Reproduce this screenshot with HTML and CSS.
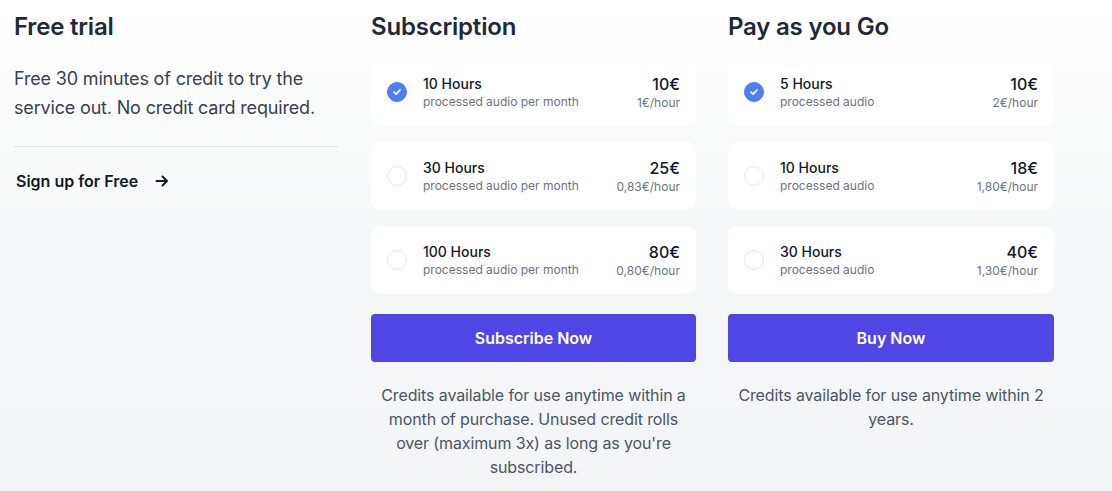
FILE: index.html
```html
<!DOCTYPE html>
<html lang="en">
<head>
<meta charset="utf-8">
<title>Pricing</title>
<link rel="stylesheet" href="styles.css">
</head>
<body>
<main class="pricing">
  <section class="col">
    <h2 class="title">Free trial</h2>
    <p class="lead">Free 30 minutes of credit to try the service out. No credit card required.</p>
    <hr class="divider">
    <a class="signup" href="#">Sign up for Free
      <svg class="arrow" width="14" height="14" viewBox="0 0 14 14" fill="none" stroke="#111827" stroke-width="2" stroke-linecap="round" stroke-linejoin="round"><path d="M1.5 7h10.5M7.5 2.5 12 7l-4.5 4.5"/></svg>
    </a>
  </section>

  <section class="col">
    <h2 class="title">Subscription</h2>
    <div class="options">
      <label class="opt">
        <span class="radio checked"><svg width="10" height="10" viewBox="0 0 10 10" fill="none" stroke="#fff" stroke-width="1.8" stroke-linecap="round" stroke-linejoin="round"><path d="M2 5.2 4.1 7.2 8 3"/></svg></span>
        <span class="info"><span class="name">10 Hours</span><span class="sub">processed audio per month</span></span>
        <span class="price"><span class="amount">10€</span><span class="sub">1€/hour</span></span>
      </label>
      <label class="opt">
        <span class="radio"></span>
        <span class="info"><span class="name">30 Hours</span><span class="sub">processed audio per month</span></span>
        <span class="price"><span class="amount">25€</span><span class="sub">0,83€/hour</span></span>
      </label>
      <label class="opt">
        <span class="radio"></span>
        <span class="info"><span class="name">100 Hours</span><span class="sub">processed audio per month</span></span>
        <span class="price"><span class="amount">80€</span><span class="sub">0,80€/hour</span></span>
      </label>
    </div>
    <button class="cta">Subscribe Now</button>
    <p class="note">Credits available for use anytime within a month of purchase. Unused credit rolls over (maximum 3x) as long as you're subscribed.</p>
  </section>

  <section class="col">
    <h2 class="title">Pay as you Go</h2>
    <div class="options">
      <label class="opt">
        <span class="radio checked"><svg width="10" height="10" viewBox="0 0 10 10" fill="none" stroke="#fff" stroke-width="1.8" stroke-linecap="round" stroke-linejoin="round"><path d="M2 5.2 4.1 7.2 8 3"/></svg></span>
        <span class="info"><span class="name">5 Hours</span><span class="sub">processed audio</span></span>
        <span class="price"><span class="amount">10€</span><span class="sub">2€/hour</span></span>
      </label>
      <label class="opt">
        <span class="radio"></span>
        <span class="info"><span class="name">10 Hours</span><span class="sub">processed audio</span></span>
        <span class="price"><span class="amount">18€</span><span class="sub">1,80€/hour</span></span>
      </label>
      <label class="opt">
        <span class="radio"></span>
        <span class="info"><span class="name">30 Hours</span><span class="sub">processed audio</span></span>
        <span class="price"><span class="amount">40€</span><span class="sub">1,30€/hour</span></span>
      </label>
    </div>
    <button class="cta">Buy Now</button>
    <p class="note">Credits available for use anytime within 2 years.</p>
  </section>
</main>
</body>
</html>
```

FILE: styles.css
```css
* { box-sizing: border-box; }
html, body { margin: 0; padding: 0; }
body {
  width: 1112px;
  height: 491px;
  overflow: hidden;
  font-family: Inter, "Noto Sans", sans-serif;
  color: #111827;
  background: linear-gradient(180deg, #ffffff 0%, #f7f8f9 45%, #f3f4f6 100%);
}
.pricing {
  display: grid;
  grid-template-columns: 325px 325px 326px;
  column-gap: 32px;
  padding: 11px 0 0 14px;
}
.col { display: flex; flex-direction: column; }
.title {
  margin: 0;
  font-size: 24px;
  line-height: 32px;
  font-weight: 600;
  color: #1f2937;
  letter-spacing: -0.2px;
}
.lead {
  margin: 21px 0 0;
  font-size: 18px;
  line-height: 29px;
  color: #374151;
  letter-spacing: -0.17px;
}
.divider {
  margin: 24px 0 0;
  border: 0;
  border-top: 1px solid #e5e7eb;
  height: 0;
}
.signup {
  margin: 22px 0 0 2px;
  display: flex;
  align-items: center;
  gap: 17px;
  font-size: 16px;
  line-height: 24px;
  font-weight: 600;
  color: #111827;
  text-decoration: none;
}
.options {
  margin-top: 15px;
  display: flex;
  flex-direction: column;
  gap: 16px;
}
.opt {
  display: flex;
  align-items: center;
  background: #ffffff;
  border-radius: 10px;
  padding: 16px;
  height: 68px;
}
.radio {
  width: 20px;
  height: 20px;
  border-radius: 50%;
  border: 1px solid #e5e7eb;
  background: #fff;
  flex: none;
  display: flex;
  align-items: center;
  justify-content: center;
}
.radio.checked {
  background: #4d7ff0;
  border-color: #4d7ff0;
}
.info {
  display: flex;
  flex-direction: column;
  margin-left: 16px;
  flex: 1;
}
.name {
  font-size: 14px;
  line-height: 20px;
  font-weight: 500;
  color: #111827;
}
.sub {
  font-size: 12px;
  line-height: 16px;
  color: #6b7280;
}
.price {
  display: flex;
  flex-direction: column;
  align-items: flex-end;
}
.amount {
  font-size: 16px;
  line-height: 22px;
  font-weight: 500;
  color: #111827;
}
.cta {
  margin-top: 20px;
  height: 48px;
  border: 0;
  border-radius: 4px;
  background: #4f46e5;
  color: #fff;
  font-family: inherit;
  font-size: 16px;
  font-weight: 600;
  cursor: pointer;
}
.note {
  margin: 21px 0 0;
  text-align: center;
  font-size: 16px;
  line-height: 24px;
  color: #4b5563;
  letter-spacing: -0.12px;
}
```
